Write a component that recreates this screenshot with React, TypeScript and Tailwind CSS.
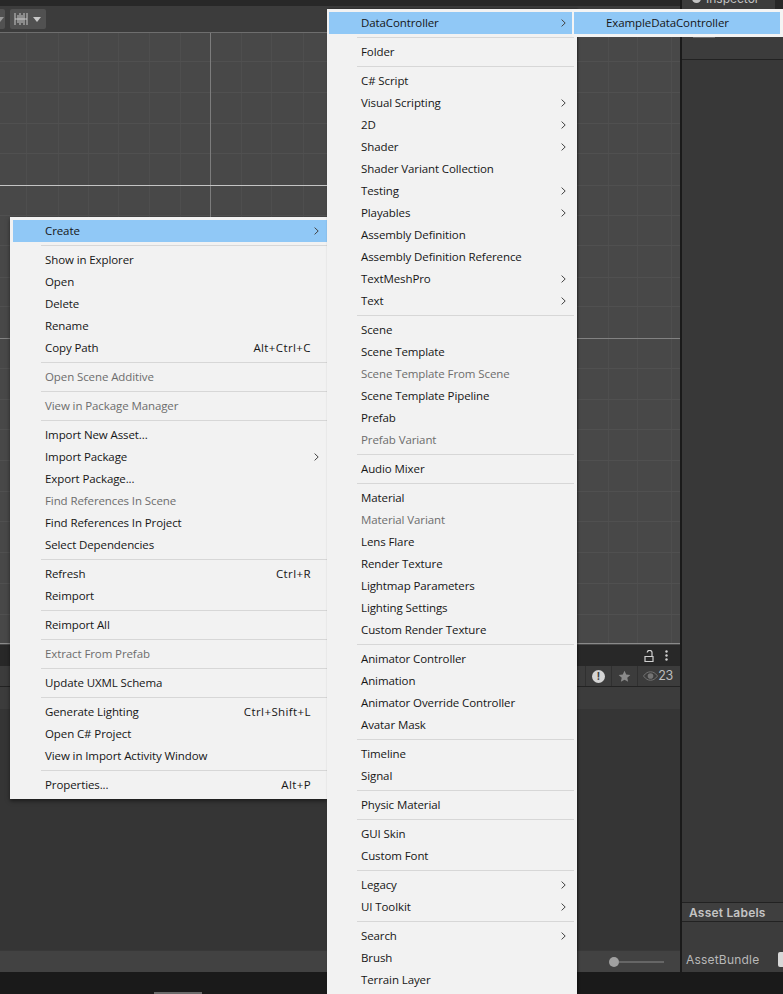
const LEFT_MENU = [
  [{ label: 'Create', arrow: true, active: true }],
  [
    { label: 'Show in Explorer' },
    { label: 'Open' },
    { label: 'Delete' },
    { label: 'Rename' },
    { label: 'Copy Path', shortcut: 'Alt+Ctrl+C' },
  ],
  [{ label: 'Open Scene Additive', disabled: true }],
  [{ label: 'View in Package Manager', disabled: true }],
  [
    { label: 'Import New Asset...' },
    { label: 'Import Package', arrow: true },
    { label: 'Export Package...' },
    { label: 'Find References In Scene', disabled: true },
    { label: 'Find References In Project' },
    { label: 'Select Dependencies' },
  ],
  [{ label: 'Refresh', shortcut: 'Ctrl+R' }, { label: 'Reimport' }],
  [{ label: 'Reimport All' }],
  [{ label: 'Extract From Prefab', disabled: true }],
  [{ label: 'Update UXML Schema' }],
  [
    { label: 'Generate Lighting', shortcut: 'Ctrl+Shift+L' },
    { label: 'Open C# Project' },
    { label: 'View in Import Activity Window' },
  ],
  [{ label: 'Properties...', shortcut: 'Alt+P' }],
];

const CREATE_MENU = [
  [{ label: 'DataController', arrow: true, active: true }],
  [{ label: 'Folder' }],
  [
    { label: 'C# Script' },
    { label: 'Visual Scripting', arrow: true },
    { label: '2D', arrow: true },
    { label: 'Shader', arrow: true },
    { label: 'Shader Variant Collection' },
    { label: 'Testing', arrow: true },
    { label: 'Playables', arrow: true },
    { label: 'Assembly Definition' },
    { label: 'Assembly Definition Reference' },
    { label: 'TextMeshPro', arrow: true },
    { label: 'Text', arrow: true },
  ],
  [
    { label: 'Scene' },
    { label: 'Scene Template' },
    { label: 'Scene Template From Scene', disabled: true },
    { label: 'Scene Template Pipeline' },
    { label: 'Prefab' },
    { label: 'Prefab Variant', disabled: true },
  ],
  [{ label: 'Audio Mixer' }],
  [
    { label: 'Material' },
    { label: 'Material Variant', disabled: true },
    { label: 'Lens Flare' },
    { label: 'Render Texture' },
    { label: 'Lightmap Parameters' },
    { label: 'Lighting Settings' },
    { label: 'Custom Render Texture' },
  ],
  [
    { label: 'Animator Controller' },
    { label: 'Animation' },
    { label: 'Animator Override Controller' },
    { label: 'Avatar Mask' },
  ],
  [{ label: 'Timeline' }, { label: 'Signal' }],
  [{ label: 'Physic Material' }],
  [{ label: 'GUI Skin' }, { label: 'Custom Font' }],
  [{ label: 'Legacy', arrow: true }, { label: 'UI Toolkit', arrow: true }],
  [{ label: 'Search', arrow: true }, { label: 'Brush' }, { label: 'Terrain Layer' }],
];

type Item = { label: string; arrow?: boolean; active?: boolean; disabled?: boolean; shortcut?: string };

function Chevron() {
  return (
    <svg width="5" height="8" viewBox="0 0 5 8" fill="none" stroke="#444" strokeWidth="1">
      <path d="M0.6 0.6 L4.2 4 L0.6 7.4" />
    </svg>
  );
}

function Row({ item, rowPad }: { item: Item; rowPad: string }) {
  return (
    <div className={`flex h-[22px] items-center pl-[32px] ${rowPad} ${item.active ? 'bg-[#90c8f6]' : ''}`}>
      <span className={`flex-1 whitespace-nowrap ${item.disabled ? 'text-[#6d6d6d]' : 'text-[#161616]'}`}>{item.label}</span>
      {item.shortcut && <span className="mr-[8px] whitespace-nowrap tracking-[0.4px] text-[#161616]">{item.shortcut}</span>}
      {item.arrow && <Chevron />}
    </div>
  );
}

function Menu({ groups, className, sepInset, rowPad }: { groups: Item[][]; className: string; sepInset: string; rowPad: string }) {
  return (
    <div className={`absolute z-10 bg-[#f2f2f2] py-[3px] font-['Open_Sans','Liberation_Sans',sans-serif] text-[11.5px] tracking-[-0.1px] ${className}`}>
      {groups.map((group, i) => (
        <div key={i}>
          {i > 0 && (
            <div className="flex h-[7px] items-center">
              <div className={`h-px flex-1 bg-[#d7d7d7] ${sepInset}`} />
            </div>
          )}
          {group.map((item) => (
            <Row key={item.label} item={item} rowPad={rowPad} />
          ))}
        </div>
      ))}
    </div>
  );
}

function SceneGrid() {
  const cols = [26, 58, 88, 118, 149, 180, 241, 271, 303, 608, 637, 671];
  const rows = [62, 93, 124, 154, 216, 246, 278, 307, 369, 400, 430, 461, 492, 522, 553, 584, 615];
  return (
    <svg className="absolute inset-0 h-full w-full" width="680" height="612">
      {cols.map((x) => (
        <line key={x} x1={x + 0.5} y1="0" x2={x + 0.5} y2="612" stroke="#4e4e4e" />
      ))}
      {rows.map((y) => (
        <line key={y} x1="0" y1={y - 32.5} x2="680" y2={y - 32.5} stroke="#505050" />
      ))}
      <line x1="210.5" y1="0" x2="210.5" y2="612" stroke="#7c7c7c" />
      <line x1="0" y1="153.5" x2="400" y2="153.5" stroke="#c4c4c4" />
      <line x1="400" y1="153.5" x2="680" y2="153.5" stroke="#505050" />
      <line x1="0" y1="306.5" x2="680" y2="306.5" stroke="#828282" />
      <line x1="0" y1="0.5" x2="680" y2="0.5" stroke="#6e6e6e" />
      <line x1="0" y1="611.5" x2="680" y2="611.5" stroke="#8a8a8a" />
    </svg>
  );
}

export default function App() {
  return (
    <div className="relative flex h-[994px] w-[783px] flex-col overflow-hidden bg-[#1a1a1a] font-['Inter','Liberation_Sans',sans-serif] text-[12px] text-[#c4c4c4]">
      <div className="flex min-h-0 flex-1">
        {/* Scene + project */}
        <div className="flex w-[680px] flex-col">
          <div className="h-[6px] bg-[#282828]" />
          <div className="flex h-[26px] gap-[5px] bg-[#3c3c3c] pt-[3px]">
            <div className="flex h-[20px] w-[5px] items-center overflow-hidden rounded-r-[2px] bg-[#515151]">
              <svg className="shrink-0 -translate-x-[4px]" width="8" height="5" viewBox="0 0 8 5" fill="#9a9a9a">
                <path d="M0 0H8L4 5Z" />
              </svg>
            </div>
            <div className="flex h-[20px] w-[36px] items-center gap-[5px] rounded-[2px] bg-[#515151] pl-[4px]">
              <svg width="14" height="12" viewBox="0 0 14 12" stroke="#c8c8c8" strokeWidth="1">
                <path d="M1 0V12M4 2V10M6 0V12M8 2V10M10 0V12M13 0V12M1 6H13" />
              </svg>
              <svg width="8" height="5" viewBox="0 0 8 5" fill="#c8c8c8">
                <path d="M0 0H8L4 5Z" />
              </svg>
            </div>
          </div>
          <div className="relative h-[613px] bg-[#484848]">
            <SceneGrid />
          </div>
          <div className="flex h-[21px] items-center justify-end bg-[#282828] pr-[12px]">
            <svg width="10" height="12" viewBox="0 0 10 12" fill="none" stroke="#d0d0d0" strokeWidth="1.2">
              <path d="M1 6.5H9V11.5H1ZM8 6.5V3A2.3 2.3 0 0 0 3.2 2.5" />
            </svg>
            <svg className="ml-[11px]" width="3" height="11" viewBox="0 0 3 11" fill="#d0d0d0">
              <circle cx="1.5" cy="1.5" r="1.2" />
              <circle cx="1.5" cy="5.5" r="1.2" />
              <circle cx="1.5" cy="9.5" r="1.2" />
            </svg>
          </div>
          <div className="flex h-[21px] items-center justify-end border-b border-[#232323] bg-[#3c3c3c]">
            <div className="flex h-full w-[27px] items-center justify-center border-x border-[#303030]">
              <div className="flex h-[13px] w-[13px] items-center justify-center rounded-full bg-[#d4d4d4] text-[10px] font-bold leading-none text-[#3c3c3c]">!</div>
            </div>
            <div className="flex h-full w-[26px] items-center justify-center border-r border-[#303030]">
              <svg width="13" height="13" viewBox="0 0 24 24" fill="#8a8a8a">
                <path d="M12 1.5l3.2 7 7.6.8-5.7 5.1 1.6 7.5L12 18l-6.7 3.9 1.6-7.5L1.2 9.3l7.6-.8z" />
              </svg>
            </div>
            <div className="flex w-[42px] items-center justify-end pr-[7px]">
              <svg width="15" height="10" viewBox="0 0 16 10">
                <path d="M0.5 5C3 1.5 5.5 0.5 8 0.5S13 1.5 15.5 5C13 8.5 10.5 9.5 8 9.5S3 8.5 0.5 5Z" fill="none" stroke="#747474" />
                <circle cx="8" cy="5" r="3" fill="#747474" />
              </svg>
              <span className="text-[12.5px] tracking-[-0.3px] text-[#bdbdbd]">23</span>
            </div>
          </div>
          <div className="h-[22px] bg-[#3c3c3c]" />
          <div className="flex-1 bg-[#353535]" />
          <div className="flex h-[22px] items-center justify-end border-t border-[#383838] bg-[#424242] pr-[16px]">
            <div className="h-[10px] w-[10px] rounded-full bg-[#a0a0a0]" />
            <div className="h-[2px] w-[45px] bg-[#666666]" />
          </div>
        </div>

        {/* Inspector */}
        <div className="ml-[2px] flex flex-1 flex-col bg-[#383838]">
          <div className="flex h-[9px] bg-[#282828]">
            <div className="flex h-full w-[93px] items-end overflow-hidden bg-[#3c3c3c] pl-[10px]">
              <div className="mb-[6px] mr-[5px] h-[9px] w-[9px] shrink-0 rounded-full bg-[#c4c4c4]" />
              <span className="mb-[4px] whitespace-nowrap leading-none">Inspector</span>
            </div>
          </div>
          <div className="h-[51px] border-b border-[#222] bg-[#3c3c3c] pl-[11px] pt-[28px]">
            <div className="h-px w-[22px] bg-[#6a6a6a]" />
          </div>
          <div className="flex-1" />
          <div className="flex h-[20px] items-center border-y border-[#222] bg-[#3f3f3f] pl-[7px] pt-[1px] font-semibold tracking-[0.2px] text-[#c4c4c4]">Asset Labels</div>
          <div className="h-[27px] bg-[#3c3c3c]" />
          <div className="flex h-[23px] items-center bg-[#3c3c3c] pb-[2px] pl-[4px] tracking-[0.2px] text-[#b8b8b8]">
            <span className="flex-1">AssetBundle</span>
            <div className="h-[15px] w-[5px] rounded-l-[2px] bg-[#d8d8d8]" />
          </div>
        </div>
      </div>
      <div className="flex h-[22px] shrink-0 items-end bg-[#1a1a1a] pl-[154px]">
        <div className="h-[2px] w-[48px] bg-[#6a6a6a]" />
      </div>

      <Menu groups={LEFT_MENU} rowPad="pr-[8px]" sepInset="ml-[28px]" className="left-[10px] top-[217px] w-[317px] pl-[3px] shadow-[0_2px_4px_rgba(0,0,0,0.5)]" />
      <Menu groups={CREATE_MENU} rowPad="pr-[6px]" sepInset="ml-[28px] mr-[-2px]" className="left-[327px] top-[9px] h-[985px] w-[250px] pl-[2px] pr-[5px] shadow-[1px_0_2px_rgba(0,0,0,0.5)]" />
      <div className="absolute left-[572px] top-[9px] z-20 h-[28px] w-[211px] border-y-[3px] border-l-[2px] border-r-[3px] border-[#f4f4f4] bg-[#90c8f6] font-['Open_Sans','Liberation_Sans',sans-serif] text-[11.5px] tracking-[-0.1px] text-[#161616]">
        <div className="flex h-[22px] items-center pl-[32px]">ExampleDataController</div>
      </div>
    </div>
  );
}
